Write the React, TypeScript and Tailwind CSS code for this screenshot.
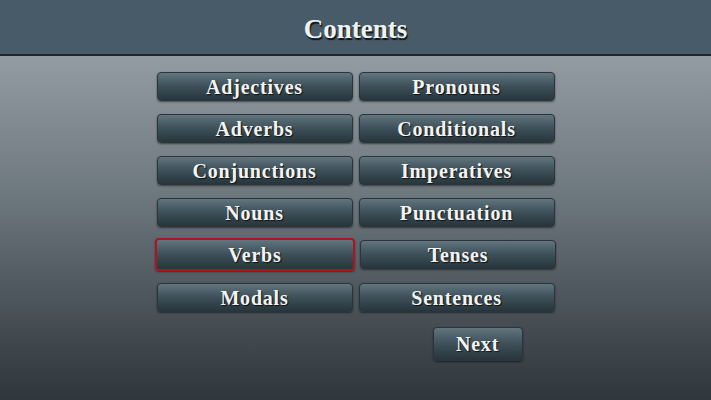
const rows: [string, string][] = [
  ["Adjectives", "Pronouns"],
  ["Adverbs", "Conditionals"],
  ["Conjunctions", "Imperatives"],
  ["Nouns", "Punctuation"],
  ["Verbs", "Tenses"],
  ["Modals", "Sentences"],
];

const serif = "font-['Liberation_Serif','Times_New_Roman',serif]";

function TopicButton({ label, active = false, className = "" }: { label: string; active?: boolean; className?: string }) {
  return (
    <button
      className={`${serif} flex items-center justify-center rounded-[4px] bg-gradient-to-b from-[#62767f] via-[#3d4f58] to-[#28363c] text-[20px] font-bold tracking-[0.8px] text-[#f2f4f4] [text-shadow:1px_1px_1px_#111] shadow-[0_1px_2px_rgba(0,0,0,0.5)] ${
        active ? "border-2 border-[#b0141c]" : "border border-[#2a343a]"
      } ${className}`}
    >
      {label}
    </button>
  );
}

export default function App() {
  return (
    <div className="flex h-[400px] w-[711px] flex-col overflow-hidden bg-gradient-to-b from-[#a3abb1] via-[#6c767d] to-[#2f363c]">
      {/* Title bar */}
      <div className="flex h-[56px] items-center justify-center border-b-[2px] border-[#1d262c] bg-[#485b68] pt-1">
        <h1 className={`${serif} text-[27px] font-bold text-[#eef2f2] [text-shadow:1px_2px_1px_#101010]`}>Contents</h1>
      </div>

      {/* Topic grid */}
      <div className="mt-[16px] flex flex-col items-center">
        {rows.map(([left, right], i) => (
          <div key={left} className={`flex gap-[6px] ${i === 5 ? "mt-[14px]" : i > 0 ? "mt-[13px]" : ""}`}>
            <TopicButton
              label={left}
              active={left === "Verbs"}
              className={left === "Verbs" ? "h-[33px] w-[200px] -my-[2px]" : "h-[29px] w-[196px]"}
            />
            <TopicButton label={right} className={i === 4 ? "h-[29px] w-[196px] -ml-[1px]" : "h-[29px] w-[196px]"} />
          </div>
        ))}
        <div className="mt-[15px] flex w-[398px] justify-end pr-[32px]">
          <TopicButton label="Next" className="h-[34px] w-[90px]" />
        </div>
      </div>
    </div>
  );
}
